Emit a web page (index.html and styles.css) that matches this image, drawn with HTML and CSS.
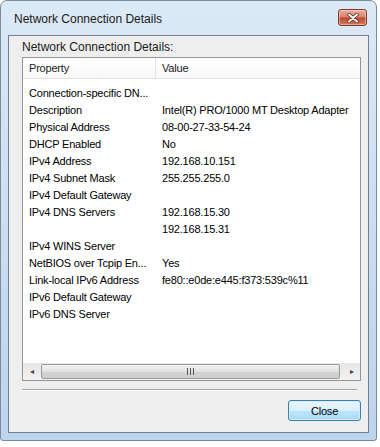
FILE: index.html
```html
<!DOCTYPE html>
<html lang="en">
<head>
    <meta charset="UTF-8">
    <title>Network Connection Details</title>
    <link rel="stylesheet" href="styles.css">
</head>
<body>
<div class="window">
    <div class="titlebar">
        <span class="title">Network Connection Details</span>
        <button class="close-x" aria-label="Close">
            <svg width="14" height="10" viewBox="0 0 14 10">
                <path d="M3 1.5 L11 8.5 M11 1.5 L3 8.5" stroke="#5a1e14" stroke-width="3.4" stroke-linecap="round"/>
                <path d="M3 1.5 L11 8.5 M11 1.5 L3 8.5" stroke="#ffffff" stroke-width="2" stroke-linecap="round"/>
            </svg>
        </button>
    </div>
    <div class="client">
        <div class="caption">Network Connection Details:</div>
        <div class="listview">
            <div class="lv-header">
                <div class="hcol prop">Property</div>
                <div class="hcol val">Value</div>
            </div>
            <div class="lv-body">
                <div class="row"><span class="prop">Connection-specific DN...</span><span class="val"></span></div>
                <div class="row"><span class="prop">Description</span><span class="val">Intel(R) PRO/1000 MT Desktop Adapter</span></div>
                <div class="row"><span class="prop">Physical Address</span><span class="val">08-00-27-33-54-24</span></div>
                <div class="row"><span class="prop">DHCP Enabled</span><span class="val">No</span></div>
                <div class="row"><span class="prop">IPv4 Address</span><span class="val">192.168.10.151</span></div>
                <div class="row"><span class="prop">IPv4 Subnet Mask</span><span class="val">255.255.255.0</span></div>
                <div class="row"><span class="prop">IPv4 Default Gateway</span><span class="val"></span></div>
                <div class="row"><span class="prop">IPv4 DNS Servers</span><span class="val">192.168.15.30</span></div>
                <div class="row"><span class="prop"></span><span class="val">192.168.15.31</span></div>
                <div class="row"><span class="prop">IPv4 WINS Server</span><span class="val"></span></div>
                <div class="row"><span class="prop">NetBIOS over Tcpip En...</span><span class="val">Yes</span></div>
                <div class="row"><span class="prop">Link-local IPv6 Address</span><span class="val">fe80::e0de:e445:f373:539c%11</span></div>
                <div class="row"><span class="prop">IPv6 Default Gateway</span><span class="val"></span></div>
                <div class="row"><span class="prop">IPv6 DNS Server</span><span class="val"></span></div>
            </div>
            <div class="hscroll">
                <div class="sb-arrow">&#9666;</div>
                <div class="sb-track">
                    <div class="sb-thumb"><span class="grip"></span><span class="grip"></span><span class="grip"></span></div>
                </div>
                <div class="sb-arrow">&#9656;</div>
            </div>
        </div>
        <div class="separator"></div>
        <div class="actions">
            <button class="btn">Close</button>
        </div>
    </div>
</div>
</body>
</html>
```
FILE: styles.css
```css
body {
    margin: 0;
    background-color: #ffffff;
    font-family: "Liberation Sans", Arial, sans-serif;
    font-size: 12px;
    color: #000;
}
.window {
    width: 375px;
    height: 439px;
    border: 1px solid #7b8a9c;
    border-radius: 7px 7px 3px 3px;
    background: linear-gradient(180deg, #dce9f6 0%, #cfe0f2 40%, #bcd4ec 100%);
    display: flex;
    flex-direction: column;
}
.titlebar {
    height: 34px;
    display: flex;
    align-items: flex-start;
    padding-left: 13px;
}
.title {
    margin-top: 11px;
    font-size: 12px;
    color: #1b1b1b;
}
.close-x {
    margin-left: auto;
    margin-right: 9px;
    margin-top: 8px;
    width: 29px;
    height: 17px;
    padding: 0;
    border: 1px solid #81382b;
    border-radius: 3px;
    background: linear-gradient(180deg, #eab2a4 0%, #d8826d 45%, #c14a31 55%, #d27a62 100%);
    display: flex;
    align-items: center;
    justify-content: center;
    box-shadow: inset 0 0 0 1px rgba(255, 220, 210, 0.5);
}
.client {
    flex: 1;
    margin: 0 7px 7px 7px;
    border: 1px solid #6e7f93;
    background-color: #eeeeee;
    padding: 4px 7px 11px 13px;
    display: flex;
    flex-direction: column;
}
.caption {
    line-height: 15px;
    height: 15px;
    color: #1b1b1b;
}
.listview {
    margin-top: 2px;
    height: 322px;
    border: 1px solid #8f959c;
    background-color: #ffffff;
    display: flex;
    flex-direction: column;
    font-size: 11px;
    letter-spacing: -0.2px;
}
.lv-header {
    height: 20px;
    display: flex;
    border-bottom: 1px solid #e2e3e5;
    background: linear-gradient(180deg, #ffffff 0%, #f7f8f9 100%);
}
.hcol {
    line-height: 20px;
    padding-left: 6px;
    color: #222;
}
.hcol.prop {
    width: 126px;
    border-right: 1px solid #e3e4e6;
}
.lv-body {
    flex: 1;
    padding-top: 6px;
    overflow: hidden;
}
.row {
    display: flex;
    height: 17px;
    line-height: 17px;
    white-space: nowrap;
}
.row .prop {
    width: 127px;
    padding-left: 6px;
    flex-shrink: 0;
}
.row .val {
    padding-left: 6px;
}
.hscroll {
    height: 17px;
    display: flex;
    background: linear-gradient(180deg, #e6e6e6 0%, #f2f2f2 100%);
    letter-spacing: 0;
}
.sb-arrow {
    width: 17px;
    line-height: 17px;
    text-align: center;
    font-size: 8px;
    color: #444;
}
.sb-track {
    flex: 1;
    padding: 1px 3px 1px 1px;
}
.sb-thumb {
    height: 13px;
    border: 1px solid #9b9b9b;
    border-radius: 2px;
    background: linear-gradient(180deg, #f2f2f2 0%, #e1e1e1 50%, #d3d3d3 51%, #cfcfcf 100%);
    display: flex;
    justify-content: center;
    align-items: center;
    gap: 2px;
}
.grip {
    width: 1px;
    height: 7px;
    background-color: #555;
}
.separator {
    margin-top: 8px;
    margin-right: 4px;
    height: 1px;
    background-color: #a0a0a0;
    border-bottom: 1px solid #ffffff;
}
.actions {
    margin-top: 9px;
    display: flex;
    justify-content: flex-end;
}
.btn {
    width: 73px;
    height: 21px;
    padding: 0;
    font-family: "Liberation Sans", Arial, sans-serif;
    font-size: 11px;
    letter-spacing: -0.2px;
    color: #000;
    border: 1px solid #3c7fb1;
    border-radius: 3px;
    background: linear-gradient(180deg, #eaf6fd 0%, #d9f0fc 50%, #bee6fd 51%, #a7d9f5 100%);
    box-shadow: inset 0 0 0 1px #d6ecf8;
}
```
